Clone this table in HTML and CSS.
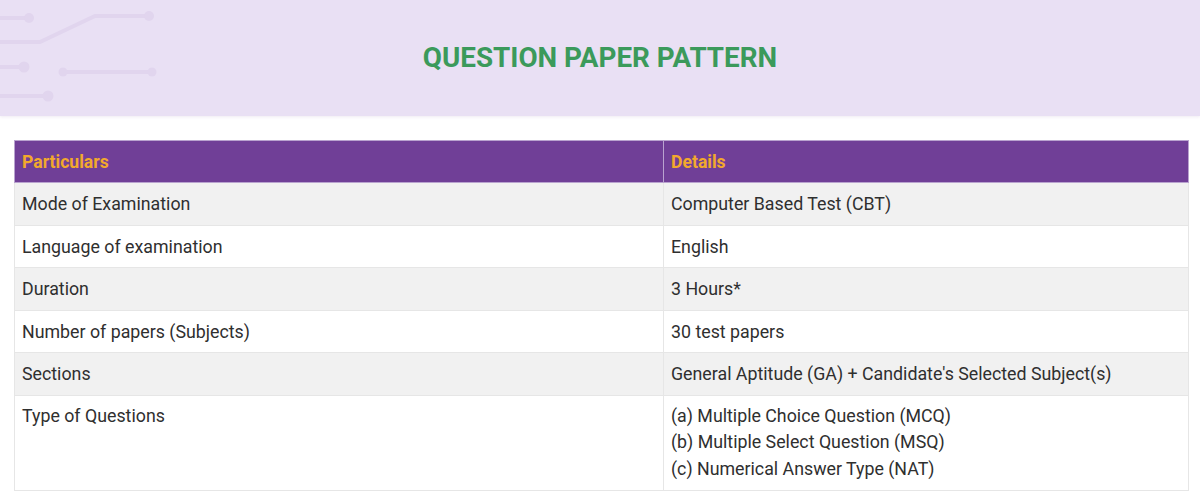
FILE: index.html
```html
<!DOCTYPE html>
<html lang="en">
<head>
<meta charset="utf-8">
<title>Question Paper Pattern</title>
<link rel="stylesheet" href="styles.css">
</head>
<body>
<header class="banner">
  <svg class="circuit" width="170" height="116" viewBox="0 0 170 116" aria-hidden="true">
    <g stroke="#e1d5ee" stroke-width="4" fill="none" stroke-linecap="round">
      <path d="M0 18 H28"/>
      <path d="M0 42 H40 L95 16 H150"/>
      <path d="M0 67 H24"/>
      <path d="M62 72 H152"/>
      <path d="M0 96 H48"/>
    </g>
    <g fill="#e1d5ee">
      <circle cx="29" cy="18" r="5"/>
      <circle cx="149" cy="16" r="5"/>
      <circle cx="24" cy="67" r="5.5"/>
      <circle cx="63" cy="72" r="4.5"/>
      <circle cx="152" cy="72" r="4.5"/>
      <circle cx="48" cy="96" r="5.5"/>
    </g>
  </svg>
  <h1 class="title">QUESTION PAPER PATTERN</h1>
</header>
<main class="content">
  <table class="pattern">
    <thead>
      <tr><th>Particulars</th><th>Details</th></tr>
    </thead>
    <tbody>
      <tr><td>Mode of Examination</td><td>Computer Based Test (CBT)</td></tr>
      <tr><td>Language of examination</td><td>English</td></tr>
      <tr><td>Duration</td><td>3 Hours*</td></tr>
      <tr><td>Number of papers (Subjects)</td><td>30 test papers</td></tr>
      <tr><td>Sections</td><td>General Aptitude (GA) + Candidate's Selected Subject(s)</td></tr>
      <tr><td>Type of Questions</td><td>(a) Multiple Choice Question (MCQ)<br>(b) Multiple Select Question (MSQ)<br>(c) Numerical Answer Type (NAT)</td></tr>
    </tbody>
  </table>
</main>
</body>
</html>
```
FILE: styles.css
```css
html, body {
  margin: 0;
  padding: 0;
  background: #ffffff;
  font-family: Roboto, "Liberation Sans", Arial, sans-serif;
}

.banner {
  position: relative;
  height: 116px;
  background: #e9e0f4;
  display: flex;
  align-items: center;
  justify-content: center;
  box-shadow: 0 1px 3px rgba(120, 90, 160, 0.12);
}

.circuit {
  position: absolute;
  left: 0;
  top: 0;
}

.title {
  margin: 0;
  font-size: 27.8px;
  font-weight: 700;
  color: #3b9a5b;
  transform: translateY(-1px);
}

.content {
  padding: 24px 11px 0 14px;
}

.pattern {
  width: 100%;
  border-collapse: collapse;
  table-layout: fixed;
  font-size: 17.8px;
  color: #2f2f2f;
}

.pattern th,
.pattern td {
  text-align: left;
  vertical-align: top;
  padding: 8px 7px;
  line-height: 25.5px;
  border: 1px solid #e6e6e6;
}

.pattern th:first-child,
.pattern td:first-child {
  width: 634px;
}

.pattern th {
  background: #703f97;
  color: #f2a92c;
  font-size: 17.6px;
  font-weight: 700;
  border-color: #b9a3cf;
  line-height: 26px;
  padding: 8px 7px 7px;
}

.pattern tbody tr:nth-child(odd) td {
  background: #f1f1f1;
}

.pattern tbody tr:nth-child(even) td {
  background: #ffffff;
}

.pattern tbody tr:last-child td {
  line-height: 26.5px;
  padding-top: 7px;
}
```
